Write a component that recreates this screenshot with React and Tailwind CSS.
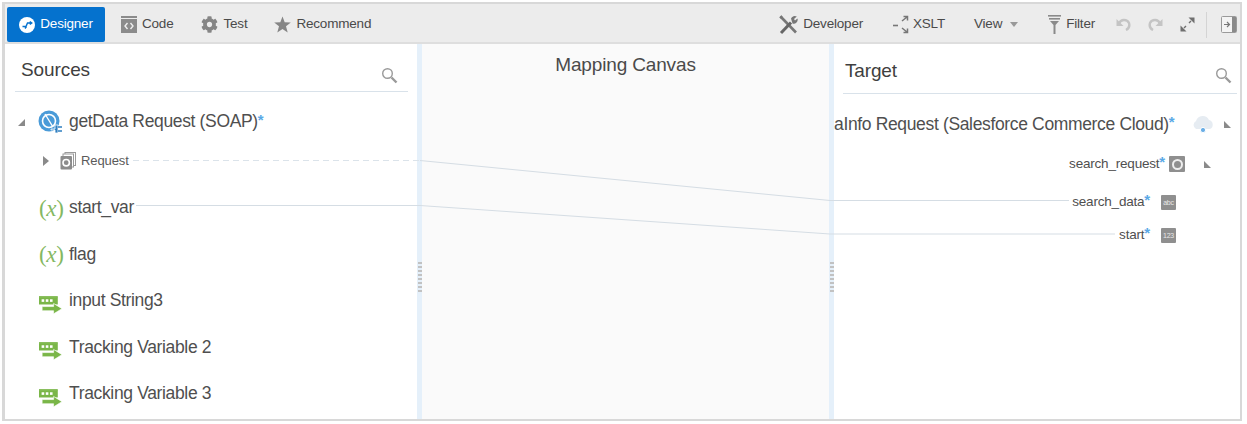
import React from "react";
import { FaCog } from "react-icons/fa";

function Triangle({ open, className }) {
  // open = little corner triangle, closed = right pointing caret
  return (
    <svg width="8" height="10" viewBox="0 0 8 10" className={className}>
      {open ? <path d="M0 9 L7 9 L7 2 Z" fill="#8a8a8a" transform="matrix(-1 0 0 1 7 0)" /> : <path d="M1 0 L7 5 L1 10 Z" fill="#8a8a8a" />}
    </svg>
  );
}

function SourceTriangle() {
  return (
    <svg width="8" height="10" viewBox="0 0 8 10">
      <path d="M0 9 L7 9 L7 2 Z" fill="#8a8a8a" />
    </svg>
  );
}

function SearchIcon() {
  return (
    <svg width="17" height="17" viewBox="0 0 17 17" fill="none" stroke="#9a9a9a">
      <circle cx="6.5" cy="6.5" r="4.8" strokeWidth="1.4" />
      <path d="M10.5 10.5 L15.5 15.5" strokeWidth="2.4" />
    </svg>
  );
}

function DesignerIcon() {
  return (
    <svg width="16" height="16" viewBox="0 0 16 16">
      <circle cx="8" cy="8" r="8" fill="#fff" />
      <path d="M3.5 9.5 H7 L8.5 6 H12.5 M10.8 4.5 L12.8 6 L10.8 7.5 M6 11.5 L7.5 9.5" stroke="#0572ce" strokeWidth="1.4" fill="none" />
    </svg>
  );
}

function CodeIcon() {
  return (
    <svg width="16" height="17" viewBox="0 0 16 17">
      <rect x="0" y="0" width="16" height="2" fill="#8b8b8b" />
      <rect x="0" y="3" width="16" height="14" fill="#8b8b8b" />
      <path d="M6.5 7 L4 10 L6.5 13 M9.5 7 L12 10 L9.5 13" stroke="#eee" strokeWidth="1.4" fill="none" />
    </svg>
  );
}

function StarIcon() {
  return (
    <svg width="17" height="17" viewBox="0 0 17 17" fill="#858585">
      <path d="M8.5 0.5 L10.7 6.3 L16.8 6.5 L12 10.3 L13.7 16.5 L8.5 12.9 L3.3 16.5 L5 10.3 L0.2 6.5 L6.3 6.3 Z" />
    </svg>
  );
}

function DeveloperIcon() {
  return (
    <svg width="19" height="20" viewBox="0 0 19 20" fill="none">
      <path d="M1.5 1.5 L17 17.5" stroke="#777" strokeWidth="2.6" />
      <path d="M1 3 L3 1" stroke="#777" strokeWidth="2" />
      <path d="M2 18 L12 7.5" stroke="#666" strokeWidth="3" />
      <path d="M12 3.5 A4 4 0 0 1 17.8 1.5 L15 4 L16 5.5 L18.5 3.5 A4 4 0 0 1 13.5 8.5 Z" fill="#777" />
    </svg>
  );
}

function XsltIcon() {
  return (
    <svg width="20" height="20" viewBox="0 0 20 20" fill="none" stroke="#777">
      <path d="M0 10.5 H5" strokeWidth="1.6" />
      <path d="M9 6 L14 2 M10.5 1.5 H14.5 V5.5" strokeWidth="1.5" />
      <path d="M9 13 L14 17 M10.5 17.5 H14.5 V13.5" strokeWidth="1.5" />
    </svg>
  );
}

function FilterIcon() {
  return (
    <svg width="13" height="19" viewBox="0 0 13 19" fill="#8a8a8a">
      <rect x="0" y="0" width="13" height="1.6" />
      <rect x="1" y="3" width="11" height="1.6" />
      <path d="M2 6 H11 L7.5 10 V19 H5.5 V10 Z" />
    </svg>
  );
}

function UndoIcon({ flip }) {
  return (
    <svg width="15" height="13" viewBox="0 0 15 13" className={flip ? "-scale-x-100" : ""} fill="none">
      <path d="M0.5 1 V8 H7.5 Z" fill="#c4c4c4" />
      <path d="M3 5.5 A5.5 5.5 0 0 1 13 5 A6 6 0 0 1 10 12" stroke="#c4c4c4" strokeWidth="2.4" />
    </svg>
  );
}

function ExpandIcon() {
  return (
    <svg width="15" height="15" viewBox="0 0 15 15" fill="#6f6f6f">
      <path d="M8.5 0.5 H14.5 V6.5 Z" />
      <path d="M0.5 14.5 V8.5 L6.5 14.5 Z" />
      <path d="M9 6 L11 4 M4 11 L6 9" stroke="#6f6f6f" strokeWidth="1.4" />
    </svg>
  );
}

function PanelIcon() {
  return (
    <svg width="16" height="17" viewBox="0 0 16 17" fill="none">
      <rect x="0.5" y="0.5" width="15" height="16" rx="1" stroke="#9a9a9a" fill="#f4f4f4" />
      <rect x="11" y="1" width="4" height="15" fill="#8a8a8a" />
      <path d="M3 8.5 H8 M6 6 L8.5 8.5 L6 11" stroke="#777" strokeWidth="1.2" />
    </svg>
  );
}

function SoapIcon() {
  return (
    <svg width="24" height="25" viewBox="0 0 24 25">
      <circle cx="11" cy="11" r="10.5" fill="#4a9bd8" />
      <circle cx="11" cy="11" r="6.5" fill="none" stroke="#fff" strokeWidth="1.6" />
      <path d="M7 4 L15 17" stroke="#fff" strokeWidth="1.4" />
      <path d="M13 19 H17 V15 H20 V23 H17 V20 H13 Z" fill="#2f7fc0" stroke="#fff" strokeWidth="0.8" />
      <path d="M20 17 H24 M20 21 H24" stroke="#2f7fc0" strokeWidth="1.4" />
    </svg>
  );
}

function RequestIcon() {
  return (
    <svg width="16" height="18" viewBox="0 0 16 18">
      <rect x="5" y="0.5" width="10.5" height="13" fill="#fff" stroke="#9a9a9a" />
      <rect x="3" y="2" width="10.5" height="13" fill="#fff" stroke="#9a9a9a" />
      <rect x="0.5" y="4" width="11.5" height="13.5" rx="1" fill="#8c8c8c" />
      <circle cx="6.2" cy="10.7" r="3.2" fill="#8c8c8c" stroke="#fff" strokeWidth="1.6" />
    </svg>
  );
}

function VarIcon() {
  return (
    <span className="w-[24px] whitespace-nowrap text-center text-[23px] leading-none text-[#84b862] [font-family:'Liberation_Serif',serif]">
      (<i>x</i>)
    </span>
  );
}

function TrackIcon() {
  return (
    <svg width="24" height="18" viewBox="0 0 23 17" className="mt-[7px]">
      <rect x="0" y="1" width="18" height="7" fill="#7ab648" />
      <rect x="0" y="0" width="18" height="1.5" fill="#7ab648" />
      <rect x="2.5" y="3" width="2.5" height="2.5" fill="#fff" />
      <rect x="6.5" y="3" width="2.5" height="2.5" fill="#fff" />
      <rect x="10.5" y="3" width="2.5" height="2.5" fill="#fff" />
      <path d="M3 10 H14 V7 L22 12 L14 17 V14 H3 Z" fill="#7ab648" stroke="#fff" strokeWidth="0.6" />
    </svg>
  );
}

function CloudIcon() {
  return (
    <svg width="24" height="20" viewBox="0 0 24 20">
      <path d="M5 15 A4.5 4.5 0 0 1 5 7 A7 7 0 0 1 18 6 A4.8 4.8 0 0 1 19 15 Z" fill="#e6ecf2" />
      <circle cx="12" cy="16" r="2.6" fill="#6aaee6" stroke="#fff" strokeWidth="1" />
    </svg>
  );
}

function TypeBox({ children }) {
  return (
    <span className="flex h-[15px] w-[15px] items-center justify-center rounded-[1px] bg-[#8f8f8f] text-[7px] leading-none text-[#e8e8e8]">
      {children}
    </span>
  );
}

function Star() {
  return <span className="relative -top-[3px] text-[15px] font-bold leading-none text-[#5aa9e6]">*</span>;
}

function ToolItem({ icon, label, className }) {
  return (
    <span className={"flex items-center gap-[5px] text-[#4a4a4a] " + (className || "")}>
      {icon}
      {label}
    </span>
  );
}

function SourceRow({ icon, label }) {
  return (
    <div className="flex h-[46.5px] items-center gap-[6px] pl-[34px] text-[17.5px] tracking-[-0.35px] text-[#4f4f4f]">
      {icon}
      <span className="relative -top-[1px]">{label}</span>
    </div>
  );
}

function Grip() {
  return (
    <div className="grid grid-cols-2 gap-x-px gap-y-[2px] px-px">
      {Array.from({ length: 16 }).map((_, i) => (
        <span key={i} className="h-[2px] w-[2px] bg-[#c2c2c2]" />
      ))}
    </div>
  );
}

function Splitter() {
  return (
    <div className="w-[5px] shrink-0 bg-[#e5f0fa] pt-[218px]">
      <Grip />
    </div>
  );
}

export default function App() {
  return (
    <div className="relative h-[424px] w-[1247px] overflow-hidden bg-white pb-[3px] pl-[2px] pr-[5px] pt-[2px] [font-family:'Liberation_Sans',Arial,sans-serif]">
      <div className="flex h-full flex-col border-2 border-l-[3px] border-[#d8d8d8] bg-white">
        {/* toolbar */}
        <div className="flex h-[40px] shrink-0 items-center border-b-2 border-[#dedede] bg-[#ececec] pt-[3px] text-[13.5px] tracking-[-0.2px]">
          <div className="ml-[2px] flex h-[35px] w-[98px] items-center justify-center gap-[5px] rounded-[2px] bg-[#0572ce] text-white">
            <DesignerIcon />
            Designer
          </div>
          <ToolItem className="ml-[16px]" icon={<CodeIcon />} label="Code" />
          <ToolItem className="ml-[28px]" icon={<FaCog size={17} color="#858585" />} label="Test" />
          <ToolItem className="ml-[27px]" icon={<StarIcon />} label="Recommend" />
          <div className="ml-auto flex items-center pr-[3px]">
            <ToolItem icon={<DeveloperIcon />} label="Developer" />
            <ToolItem className="ml-[30px] !gap-0" icon={<XsltIcon />} label="XSLT" />
            <span className="ml-[29px] text-[#4a4a4a]">View</span>
            <span className="ml-[8px] h-0 w-0 border-x-[4px] border-t-[5px] border-x-transparent border-t-[#999]" />
            <ToolItem className="ml-[30px]" icon={<FilterIcon />} label="Filter" />
            <span className="ml-[21px] flex"><UndoIcon /></span>
            <span className="ml-[17px] flex"><UndoIcon flip /></span>
            <span className="ml-[17px] flex"><ExpandIcon /></span>
            <span className="ml-[11px] h-[26px] w-px bg-[#d4d4d4]" />
            <span className="ml-[14px] flex"><PanelIcon /></span>
          </div>
        </div>

        <div className="flex min-h-0 flex-1">
          {/* sources */}
          <div className="w-[412px] shrink-0 overflow-hidden">
            <div className="ml-[10px] mr-[9px] flex h-[48px] items-center justify-between border-b border-[#d9e2ea] pl-[6px] pr-[10px]">
              <span className="relative top-[3px] text-[19px] tracking-[-0.1px] text-[#3f3f3f]">Sources</span>
              <span className="relative top-[8px] flex"><SearchIcon /></span>
            </div>
            <div className="flex h-[60px] items-center pl-[13px] text-[17.5px] tracking-[-0.35px] text-[#4f4f4f]">
              <SourceTriangle />
              <span className="ml-[12px] flex"><SoapIcon /></span>
              <span className="relative -top-[1px] ml-[7px]">getData Request (SOAP)</span>
              <Star />
            </div>
            <div className="flex h-[18px] items-center pl-[37px] text-[13px] tracking-[-0.1px] text-[#5a5a5a]">
              <Triangle />
              <span className="ml-[10px] flex"><RequestIcon /></span>
              <span className="ml-[5px]">Request</span>
            </div>
            <div className="h-[15px]" />
            <SourceRow icon={<VarIcon />} label="start_var" />
            <SourceRow icon={<VarIcon />} label="flag" />
            <SourceRow icon={<TrackIcon />} label="input String3" />
            <SourceRow icon={<TrackIcon />} label="Tracking Variable 2" />
            <SourceRow icon={<TrackIcon />} label="Tracking Variable 3" />
          </div>

          <Splitter />

          {/* canvas */}
          <div className="w-[407px] shrink-0 bg-[#fafafa] pt-[7px] text-center text-[19px] tracking-[-0.15px] text-[#4a4a4a]">
            Mapping Canvas
          </div>

          <Splitter />

          {/* target */}
          <div className="min-w-0 flex-1 overflow-hidden">
            <div className="ml-[9px] mr-[3px] flex h-[50px] items-center justify-between border-b border-[#d9e2ea] pl-[2px] pr-[5px]">
              <span className="relative top-[3px] text-[19px] tracking-[-0.15px] text-[#3f3f3f]">Target</span>
              <span className="relative top-[7px] flex"><SearchIcon /></span>
            </div>
            <div className="flex h-[60px] items-center whitespace-nowrap text-[17.5px] tracking-[-0.35px] text-[#4f4f4f]">
              <span>aInfo Request (Salesforce Commerce Cloud)</span>
              <Star />
              <span className="ml-[17px] flex"><CloudIcon /></span>
              <Triangle open className="ml-[9px]" />
            </div>
            <div className="flex h-[20px] items-center justify-end pr-[28px] text-[13.5px] tracking-[-0.2px] text-[#4f4f4f]">
              search_request
              <Star />
              <span className="ml-[4px] flex h-[16px] w-[16px] items-center justify-center rounded-[1px] bg-[#8f8f8f]">
                <span className="h-[11px] w-[11px] rounded-full border-2 border-[#eee]" />
              </span>
              <Triangle open className="ml-[19px]" />
            </div>
            <div className="mt-[18px] flex h-[20px] items-center justify-end pr-[64px] text-[13.5px] tracking-[-0.2px] text-[#4f4f4f]">
              search_data
              <Star />
              <span className="ml-[11px] flex"><TypeBox>abc</TypeBox></span>
            </div>
            <div className="mt-[13px] flex h-[20px] items-center justify-end pr-[64px] text-[13.5px] tracking-[-0.2px] text-[#4f4f4f]">
              start
              <Star />
              <span className="ml-[11px] flex"><TypeBox>123</TypeBox></span>
            </div>
          </div>
        </div>
      </div>

      {/* mapping lines drawn over the panels */}
      <svg className="pointer-events-none absolute left-0 top-0" width="1247" height="424" fill="none">
        <path d="M133 160.5 H420" stroke="#dbe3ea" strokeDasharray="6 4" />
        <path d="M420 160.5 L830 200.5 H1069" stroke="#d5dde4" />
        <path d="M136 205.5 H420 L830 234 H1115" stroke="#d5dde4" />
      </svg>
    </div>
  );
}
